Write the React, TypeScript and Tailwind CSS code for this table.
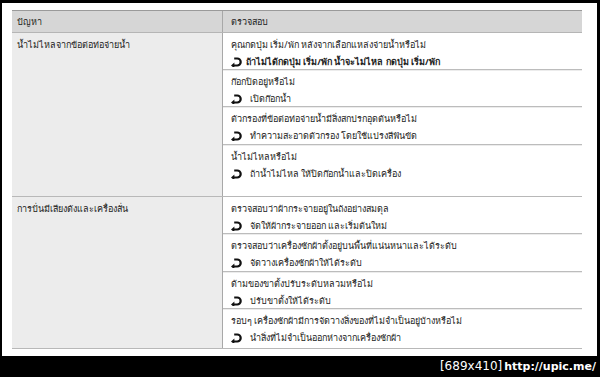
import React from "react";

type Check = { q: string; a: string; bold?: boolean; h: number };
type Group = { problem: string; checks: Check[] };

const groups: Group[] = [
  {
    problem: "น้ำไม่ไหลจากข้อต่อท่อจ่ายน้ำ",
    checks: [
      {
        q: "คุณกดปุ่ม เริ่ม/พัก หลังจากเลือกแหล่งจ่ายน้ำหรือไม่",
        a: "ถ้าไม่ได้กดปุ่ม เริ่ม/พัก น้ำจะไม่ไหล  กดปุ่ม เริ่ม/พัก",
        bold: true,
        h: 37,
      },
      { q: "ก๊อกปิดอยู่หรือไม่", a: "เปิดก๊อกน้ำ", h: 37 },
      {
        q: "ตัวกรองที่ข้อต่อท่อจ่ายน้ำมีสิ่งสกปรกอุดตันหรือไม่",
        a: "ทำความสะอาดตัวกรอง โดยใช้แปรงสีฟันขัด",
        h: 38,
      },
      { q: "น้ำไม่ไหลหรือไม่", a: "ถ้าน้ำไม่ไหล ให้ปิดก๊อกน้ำและปิดเครื่อง", h: 51 },
    ],
  },
  {
    problem: "การปั่นมีเสียงดังและเครื่องสั่น",
    checks: [
      {
        q: "ตรวจสอบว่าผ้ากระจายอยู่ในถังอย่างสมดุล",
        a: "จัดให้ผ้ากระจายออก และเริ่มต้นใหม่",
        h: 37,
      },
      {
        q: "ตรวจสอบว่าเครื่องซักผ้าตั้งอยู่บนพื้นที่แน่นหนาและได้ระดับ",
        a: "จัดวางเครื่องซักผ้าให้ได้ระดับ",
        h: 38,
      },
      { q: "ด้ามของขาตั้งปรับระดับหลวมหรือไม่", a: "ปรับขาตั้งให้ได้ระดับ", h: 37 },
      {
        q: "รอบๆ เครื่องซักผ้ามีการจัดวางสิ่งของที่ไม่จำเป็นอยู่บ้างหรือไม่",
        a: "นำสิ่งที่ไม่จำเป็นออกห่างจากเครื่องซักผ้า",
        h: 39,
      },
    ],
  },
];

// bold hook-shaped pointer placed before each remedy
function Pointer() {
  return (
    <svg width="11" height="10" viewBox="0 0 11 10" className="shrink-0">
      <path
        d="M3.2 1.5 H6.2 A3.5 3.5 0 0 1 6.2 8.5 H2.4"
        fill="none"
        stroke="#111"
        strokeWidth="2.2"
      />
      <path d="M0 8.5 L3.4 5.6 L3.4 11.4 Z" fill="#111" />
    </svg>
  );
}

export default function App() {
  return (
    <div
      className="w-[600px] h-[377px] bg-black flex flex-col pt-[3px] pl-[2px] pr-[3px] text-[#222]"
      style={{ fontFamily: "Tahoma, 'Noto Sans', 'DejaVu Sans', sans-serif" }}
    >
      <div className="h-[353px] bg-white pl-[10px] pt-[7px]">
        <div className="w-[570px] text-[9px]">
          <div className="grid grid-cols-[211px_359px] h-[23px] bg-[#d6d6d6] border-t border-[#9a9a9a] border-b border-b-[#b5b5b5]">
            <div className="pl-[5px] flex items-center border-r border-[#a8a8a8]">ปัญหา</div>
            <div className="pl-[8px] flex items-center">ตรวจสอบ</div>
          </div>
          {groups.map((g, gi) => (
            <div
              key={gi}
              className="grid grid-cols-[211px_359px] border-b border-[#b8b8b8]"
            >
              <div className="bg-[#ececec] border-r border-[#a8a8a8] pl-[5px] pt-[3px] leading-[17px]">
                {g.problem}
              </div>
              <div>
                {g.checks.map((c, ci) => (
                  <div
                    key={ci}
                    className={
                      ci < g.checks.length - 1
                        ? "pl-[8px] pt-[3px] leading-[17px] border-b border-[#bcbcbc] shadow-[0_1px_0_#ececec]"
                        : "pl-[8px] pt-[3px] leading-[17px]"
                    }
                    style={{ height: c.h }}
                  >
                    <div>{c.q}</div>
                    <div className="flex items-center">
                      <Pointer />
                      <span className={c.bold ? "ml-[4px] font-bold" : "ml-[8px]"}>
                        {c.a}
                      </span>
                    </div>
                  </div>
                ))}
              </div>
            </div>
          ))}
        </div>
      </div>
      <div className="flex-1 flex items-center justify-end pr-[1px]">
        <span
          className="text-white text-[12px]"
          style={{ fontFamily: "'DejaVu Sans', sans-serif" }}
        >
          [689x410]<span className="font-bold ml-[2px] text-[11px]">http://upic.me/</span>
        </span>
      </div>
    </div>
  );
}
